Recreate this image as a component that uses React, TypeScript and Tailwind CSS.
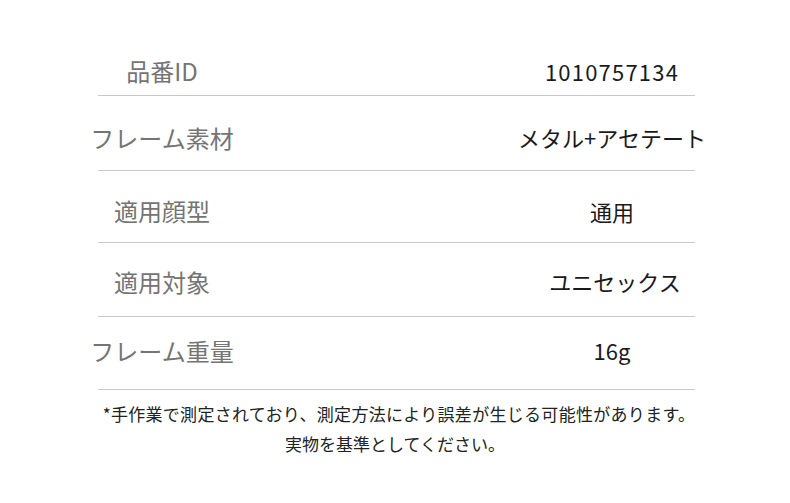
const rows = [
  { label: "品番ID", value: "1010757134", box: "h-[49px]", val: "tracking-[1.2px]" },
  { label: "フレーム素材", value: "メタル+アセテート", box: "h-[75px] pt-[9px]", val: "" },
  { label: "適用顔型", value: "通用", box: "h-[72px] pt-[9px]", val: "" },
  { label: "適用対象", value: "ユニセックス", box: "h-[74px] pt-[4px]", val: "pl-[6px]" },
  { label: "フレーム重量", value: "16g", box: "h-[73px] pb-[5px]", val: "" },
];

export default function App() {
  return (
    <div
      className="w-[790px] h-[503px] bg-white overflow-hidden"
      style={{ fontFamily: '"Noto Sans CJK JP", "Noto Sans", sans-serif' }}
    >
      <div className="ml-[98px] w-[597px] pt-[47px]">
        {rows.map((row) => (
          <div
            key={row.label}
            className={`grid grid-cols-[128px_1fr_166px] items-center border-b border-[#c9c9c9] ${row.box}`}
          >
            <div className="flex justify-center text-[24px] text-[#747474] whitespace-nowrap">{row.label}</div>
            <div />
            <div className={`flex justify-center text-[22px] text-[#1a1a1a] whitespace-nowrap ${row.val}`}>
              {row.value}
            </div>
          </div>
        ))}
      </div>
      <div className="mt-[9px] text-center text-[17px] leading-[30px] text-[#222]">
        <p className="tracking-[0.3px] pl-[8px]">*手作業で測定されており、測定方法により誤差が生じる可能性があります。</p>
        <p>実物を基準としてください。</p>
      </div>
    </div>
  );
}
